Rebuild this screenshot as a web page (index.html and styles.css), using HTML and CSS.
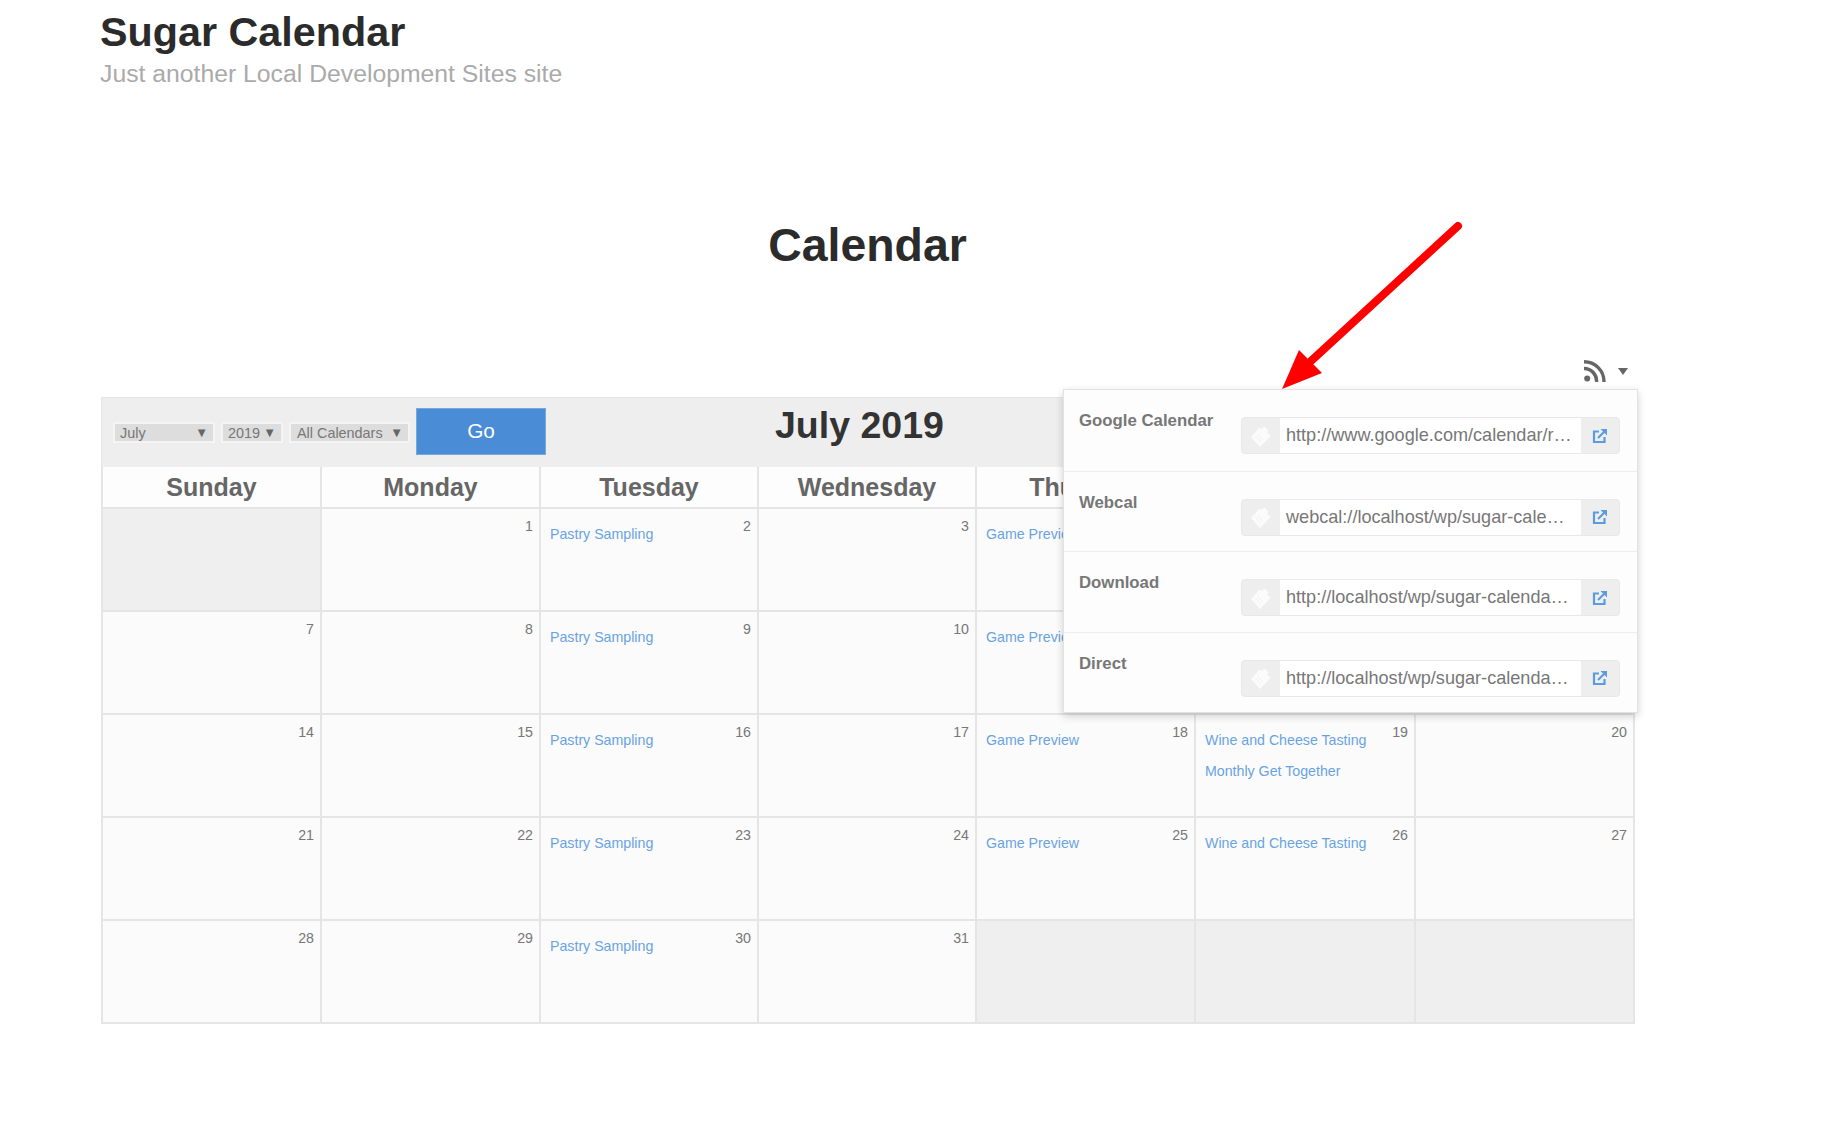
FILE: index.html
```html
<!DOCTYPE html>
<html lang="en">
<head>
	<meta charset="UTF-8">
	<title>Calendar – Sugar Calendar</title>
	<link rel="stylesheet" href="styles.css">
</head>
<body>
	<svg width="0" height="0" class="defs">
		<symbol id="copy" viewBox="0 0 24 24">
			<path fill="#fbfbfb" d="M2 13L10.500 3.500 12.500 5 15.500 2.500 19.500 6.500 18 9 22 11.500 11 23z"/>
			<path fill="none" stroke="#f0f0f0" stroke-width="1" d="M8.500 10.500l5 5M6.500 12.500l5 5"/>
		</symbol>
		<symbol id="ext" viewBox="0 0 16 16">
			<path fill="none" stroke="#5b9bdf" stroke-width="2.200" d="M7 3.500H2v10.500h10.500V9"/>
			<path fill="none" stroke="#5b9bdf" stroke-width="2.200" d="M6 10l7-7"/>
			<path fill="#5b9bdf" d="M8.500 1H15v6.500z"/>
		</symbol>
	</svg>

	<div id="page">
		<div class="site-head">
			<h1 class="site-title">Sugar Calendar</h1>
			<p class="site-desc">Just another Local Development Sites site</p>
		</div>

		<h2 class="page-title">Calendar</h2>

		<div class="feed-toggle">
			<svg class="rss" viewBox="0 0 22 22" width="22" height="22">
				<circle cx="3.200" cy="18.600" r="3" fill="#666"/>
				<path fill="none" stroke="#666" stroke-width="3.400" d="M0 8.500A12.500 12.500 0 0 1 12.500 22"/>
				<path fill="none" stroke="#666" stroke-width="3.400" d="M0 1.700A20 20 0 0 1 20 22"/>
			</svg>
			<span class="caret"></span>
		</div>

		<div id="calendar">
			<div class="cal-head">
				<form class="cal-form">
					<span class="sel sel-month">July<i>▼</i></span>
					<span class="sel sel-year">2019<i>▼</i></span>
					<span class="sel sel-cals">All Calendars<i>▼</i></span>
					<button type="button" class="go">Go</button>
				</form>
				<div class="cal-title">July 2019</div>
			</div>
			<table class="cal-table">
				<colgroup>
					<col class="c219"><col class="c219"><col class="c218"><col class="c218"><col class="c219"><col class="c220"><col class="c219">
				</colgroup>
				<thead>
					<tr><th>Sunday</th><th>Monday</th><th>Tuesday</th><th>Wednesday</th><th>Thursday</th><th>Friday</th><th>Saturday</th></tr>
				</thead>
				<tbody>
					<tr>
						<td class="blank"></td>
						<td><span class="num">1</span></td>
						<td><span class="num">2</span><a class="ev">Pastry Sampling</a></td>
						<td><span class="num">3</span></td>
						<td><span class="num">4</span><a class="ev">Game Preview</a></td>
						<td><span class="num">5</span><a class="ev">Wine and Cheese Tasting</a></td>
						<td><span class="num">6</span></td>
					</tr>
					<tr>
						<td><span class="num">7</span></td>
						<td><span class="num">8</span></td>
						<td><span class="num">9</span><a class="ev">Pastry Sampling</a></td>
						<td><span class="num">10</span></td>
						<td><span class="num">11</span><a class="ev">Game Preview</a></td>
						<td><span class="num">12</span><a class="ev">Wine and Cheese Tasting</a></td>
						<td><span class="num">13</span></td>
					</tr>
					<tr>
						<td><span class="num">14</span></td>
						<td><span class="num">15</span></td>
						<td><span class="num">16</span><a class="ev">Pastry Sampling</a></td>
						<td><span class="num">17</span></td>
						<td><span class="num">18</span><a class="ev">Game Preview</a></td>
						<td><span class="num">19</span><a class="ev">Wine and Cheese Tasting</a><a class="ev">Monthly Get Together</a></td>
						<td><span class="num">20</span></td>
					</tr>
					<tr>
						<td><span class="num">21</span></td>
						<td><span class="num">22</span></td>
						<td><span class="num">23</span><a class="ev">Pastry Sampling</a></td>
						<td><span class="num">24</span></td>
						<td><span class="num">25</span><a class="ev">Game Preview</a></td>
						<td><span class="num">26</span><a class="ev">Wine and Cheese Tasting</a></td>
						<td><span class="num">27</span></td>
					</tr>
					<tr>
						<td><span class="num">28</span></td>
						<td><span class="num">29</span></td>
						<td><span class="num">30</span><a class="ev">Pastry Sampling</a></td>
						<td><span class="num">31</span></td>
						<td class="blank"></td>
						<td class="blank"></td>
						<td class="blank"></td>
					</tr>
				</tbody>
			</table>
		</div>

		<!-- feed dropdown, sits over the calendar -->
		<div class="feeds">
			<div class="feed-row">
				<div class="feed-label">Google Calendar</div>
				<div class="feed-group">
					<span class="feed-copy"><svg width="24" height="24"><use href="#copy"/></svg></span>
					<span class="feed-url">http://www.google.com/calendar/render?cid=http://localhost/wp/sugar-calendar</span>
					<span class="feed-open"><svg width="16" height="16"><use href="#ext"/></svg></span>
				</div>
			</div>
			<div class="feed-row">
				<div class="feed-label">Webcal</div>
				<div class="feed-group">
					<span class="feed-copy"><svg width="24" height="24"><use href="#copy"/></svg></span>
					<span class="feed-url">webcal://localhost/wp/sugar-calendar/feed/ical/calendar</span>
					<span class="feed-open"><svg width="16" height="16"><use href="#ext"/></svg></span>
				</div>
			</div>
			<div class="feed-row">
				<div class="feed-label">Download</div>
				<div class="feed-group">
					<span class="feed-copy"><svg width="24" height="24"><use href="#copy"/></svg></span>
					<span class="feed-url">http://localhost/wp/sugar-calendar/feed/ical/download</span>
					<span class="feed-open"><svg width="16" height="16"><use href="#ext"/></svg></span>
				</div>
			</div>
			<div class="feed-row">
				<div class="feed-label">Direct</div>
				<div class="feed-group">
					<span class="feed-copy"><svg width="24" height="24"><use href="#copy"/></svg></span>
					<span class="feed-url">http://localhost/wp/sugar-calendar/feed/ical/direct</span>
					<span class="feed-open"><svg width="16" height="16"><use href="#ext"/></svg></span>
				</div>
			</div>
		</div>

		<!-- annotation arrow -->
		<svg class="arrow" width="190" height="170" viewBox="0 0 190 170">
			<path d="M185 6L38 141" fill="none" stroke="#f00" stroke-width="8" stroke-linecap="round"/>
			<path d="M9 169L26 130 49 153z" fill="#f00"/>
		</svg>
	</div>
</body>
</html>
```

FILE: styles.css
```css
html, body {
	margin: 0;
	padding: 0;
	background: #fff;
}
body {
	font-family: "Liberation Sans", Arial, sans-serif;
	color: #666;
}
.defs {
	position: absolute;
}
#page {
	position: relative;
	width: 1535px;
	margin-left: 100px;
	height: 1146px;
}

/* site header */
.site-head {
	padding-top: 9px;
}
.site-title {
	margin: 0;
	font-size: 41.300px;
	line-height: 46px;
	font-weight: bold;
	color: #2b2b2b;
}
.site-desc {
	margin: 5px 0 0;
	font-size: 24.750px;
	line-height: 28px;
	color: #aaa;
}
.page-title {
	margin: 129px 0 0;
	font-size: 46.400px;
	line-height: 56px;
	font-weight: bold;
	text-align: center;
	color: #2b2b2b;
}
.feed-toggle {
	display: flex;
	justify-content: flex-end;
	align-items: center;
	gap: 12px;
	height: 22px;
	margin-top: 87px;
	padding-right: 7px;
}
.rss {
	display: block;
}
.caret {
	width: 0;
	height: 0;
	border-left: 5.500px solid transparent;
	border-right: 5.500px solid transparent;
	border-top: 7px solid #666;
}

/* calendar */
#calendar {
	margin-top: 15px;
	margin-left: 1px;
	width: 1534px;
}
.cal-head {
	display: flex;
	align-items: center;
	height: 70px;
	background: #eee;
	border: 1px solid #e5e5e5;
	border-bottom: 0;
	box-sizing: border-box;
}
.cal-form {
	display: flex;
	align-items: center;
	gap: 6px;
	padding-left: 11px;
}
.sel {
	display: flex;
	justify-content: space-between;
	align-items: center;
	box-sizing: border-box;
	height: 21px;
	margin-top: 0;
	padding: 0 5px;
	border: 2px solid #f4f4f4;
	background: #ddd;
	font-size: 14.400px;
	color: #777;
}
.sel i {
	font-style: normal;
	font-size: 13px;
	color: #666;
}
.sel-month {
	width: 102px;
}
.sel-year {
	width: 62px;
}
.sel-cals {
	width: 121px;
	padding-left: 6px;
}
.go {
	width: 130px;
	height: 47px;
	margin-top: -2px;
	padding: 0 0 2px;
	border: 1px solid #76a8e0;
	background: #4a8cd6;
	color: #fff;
	font-family: inherit;
	font-size: 20.800px;
}
.cal-title {
	margin: -15px 0 0 229px;
	font-size: 37.500px;
	line-height: 42px;
	font-weight: bold;
	color: #333;
}
.cal-table {
	width: 100%;
	table-layout: fixed;
	border-collapse: collapse;
}
.c218 {
	width: 218px;
}
.c219 {
	width: 219px;
}
.c220 {
	width: 220px;
}
.cal-table th {
	height: 40px;
	padding: 0;
	background: #fdfdfd;
	border: 2px solid #e5e5e5;
	border-top: 0;
	font-size: 25px;
	font-weight: bold;
	color: #666;
}
.cal-table td {
	height: 103px;
	padding: 8px 6px 0 9px;
	box-sizing: border-box;
	vertical-align: top;
	background: #fbfbfb;
	border: 2px solid #e5e5e5;
	font-size: 14.200px;
	line-height: 20px;
}
.cal-table td.blank {
	background: #efefef;
}
.num {
	float: right;
	margin-top: -1px;
	color: #777;
}
.ev {
	display: block;
	margin-top: 7px;
	margin-bottom: 11px;
	color: #6aa3e2;
}

/* feeds dropdown */
.feeds {
	position: absolute;
	left: 963px;
	top: 389px;
	width: 575px;
	box-sizing: border-box;
	background: #fdfdfd;
	border: 1px solid #e2e2e2;
	box-shadow: 0 3px 8px rgba(0, 0, 0, 0.18);
}
.feed-row {
	display: flex;
	height: 80.500px;
	box-sizing: border-box;
	padding: 27px 17px 0 15px;
	border-top: 1px solid #eee;
}
.feed-row:first-child {
	border-top: 0;
}
.feed-label {
	width: 162px;
	margin-top: -7px;
	font-size: 16.800px;
	line-height: 22px;
	font-weight: bold;
	color: #777;
}
.feed-group {
	display: flex;
	width: 379px;
	height: 37px;
	box-sizing: border-box;
	background: #eee;
	border: 1px solid #e8e8e8;
	border-radius: 4px;
}
.feed-copy, .feed-open {
	display: flex;
	align-items: center;
	justify-content: center;
	flex: none;
	width: 38px;
}
.feed-url {
	flex: 1;
	min-width: 0;
	padding: 0 8px 0 6px;
	background: #fff;
	font-size: 18.100px;
	line-height: 34px;
	color: #777;
	white-space: nowrap;
	overflow: hidden;
	text-overflow: ellipsis;
}

.arrow {
	position: absolute;
	left: 1173px;
	top: 220px;
}
```
